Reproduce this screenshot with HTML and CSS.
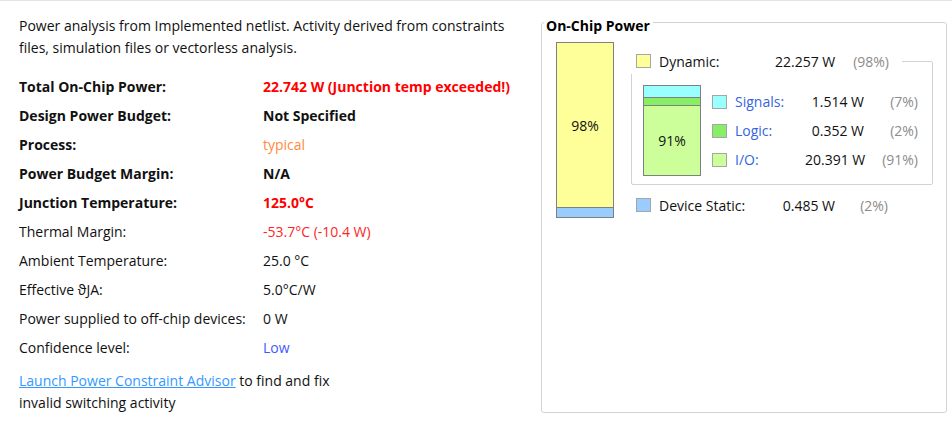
FILE: index.html
```html
<!DOCTYPE html>
<html>
<head>
<meta charset="utf-8">
<link rel="stylesheet" href="styles.css">
</head>
<body>
<div class="page">
  <section class="summary">
    <p class="intro">Power analysis from Implemented netlist. Activity derived from constraints<br>files, simulation files or vectorless analysis.</p>
    <div class="props">
      <div class="k b">Total On-Chip Power:</div><div class="v b red">22.742 W (Junction temp exceeded!)</div>
      <div class="k b">Design Power Budget:</div><div class="v b">Not Specified</div>
      <div class="k b">Process:</div><div class="v orange">typical</div>
      <div class="k b">Power Budget Margin:</div><div class="v b">N/A</div>
      <div class="k b">Junction Temperature:</div><div class="v b red">125.0°C</div>
      <div class="k">Thermal Margin:</div><div class="v red2">-53.7°C (-10.4 W)</div>
      <div class="k">Ambient Temperature:</div><div class="v">25.0 °C</div>
      <div class="k">Effective ϑJA:</div><div class="v">5.0°C/W</div>
      <div class="k">Power supplied to off-chip devices:</div><div class="v">0 W</div>
      <div class="k">Confidence level:</div><div class="v blue">Low</div>
    </div>
    <p class="advice"><a href="#">Launch Power Constraint Advisor</a> to find and fix<br>invalid switching activity</p>
  </section>
  <section class="chip">
    <div class="chip-title">On-Chip Power</div>
    <div class="chip-body">
      <div class="bar big">
        <div class="seg yellow grow">98%</div>
        <div class="seg static-seg"></div>
      </div>
      <div class="breakdown">
        <div class="row head">
          <span class="sw yellow"></span><span class="lbl">Dynamic:</span><span class="val">22.257 W</span><span class="pct">(98%)</span>
        </div>
        <div class="dyn-box">
          <div class="bar small">
            <div class="seg cyan s-sig"></div>
            <div class="seg green s-log"></div>
            <div class="seg lgreen grow">91%</div>
          </div>
          <div class="legend">
            <div class="lrow"><span class="sw cyan"></span><span class="lbl link">Signals:</span><span class="val">1.514 W</span><span class="pct">(7%)</span></div>
            <div class="lrow"><span class="sw green"></span><span class="lbl link">Logic:</span><span class="val">0.352 W</span><span class="pct">(2%)</span></div>
            <div class="lrow"><span class="sw lgreen"></span><span class="lbl link">I/O:</span><span class="val">20.391 W</span><span class="pct">(91%)</span></div>
          </div>
        </div>
        <div class="row static">
          <span class="sw blue-sw"></span><span class="lbl">Device Static:</span><span class="val">0.485 W</span><span class="pct">(2%)</span>
        </div>
      </div>
    </div>
  </section>
</div>
</body>
</html>
```

FILE: styles.css
```css
* { box-sizing: border-box; }
html, body { margin: 0; padding: 0; background: #fff; }
body {
  font-family: "Open Sans", "Noto Sans", sans-serif;
  font-size: 14px;
  color: #111;
}
.page {
  display: flex;
  align-items: flex-start;
  border-top: 1px solid #e4e4e4;
  height: 426px;
}
.summary {
  width: 541px;
  padding-left: 19px;
}
.intro {
  margin: 0;
  padding-top: 14px;
  line-height: 22px;
}
.props {
  display: grid;
  grid-template-columns: 244px auto;
  grid-auto-rows: 29px;
  align-items: center;
  margin-top: 13px;
  white-space: nowrap;
}
.b { font-weight: bold; }
.red { color: #ff0000; }
.red2 { color: #ff2626; }
.orange { color: #ff8a3c; }
.blue { color: #3d5cff; }
.advice {
  margin: 8px 0 0;
  line-height: 22px;
}
.advice a { color: #3399ff; text-decoration: underline; }

.chip {
  width: 406px;
  height: 391px;
  margin-top: 21px;
  border: 1px solid #d2d2d2;
  border-radius: 3px;
  white-space: nowrap;
}
.chip-title {
  display: table;
  margin: -6px 0 0 2px;
  padding: 0 3px 0 2px;
  background: #fff;
  font-weight: bold;
  font-size: 14px;
  line-height: 18px;
  color: #000;
}
.chip-body {
  display: flex;
  align-items: flex-start;
  padding: 7px 0 0 14px;
  gap: 17px;
}
.bar {
  display: flex;
  flex-direction: column;
  border: 1px solid #7f7f7f;
  background: #fff;
}
.bar.big { width: 58px; height: 176px; }
.bar.small { width: 58px; height: 91px; }
.seg { display: flex; align-items: center; justify-content: center; color: #111; }
.grow { flex: 1; }
.static-seg { height: 10px; border-top: 1px solid #7f7f7f; background: #99ccff; }
.s-sig { height: 11px; }
.s-log { height: 8px; border-top: 1px solid #7f7f7f; }
.lgreen.grow { border-top: 1px solid #7f7f7f; }
.yellow { background: #ffff99; }
.cyan { background: #99ffff; }
.green { background: #88ee66; }
.lgreen { background: #ccff99; }
.blue-sw { background: #99ccff; }

.breakdown {
  width: 302px;
  padding-top: 6px;
}
.row {
  display: grid;
  align-items: center;
  height: 26px;
  padding-left: 5px;
  background: #fff;
}
.val, .pct { text-align: right; }
.row.head {
  position: relative;
  z-index: 1;
  width: 271px;
  grid-template-columns: 15px 124px 60px 54px;
}
.row .lbl { padding-left: 8px; }
.pct { color: #8c8c8c; }
.sw {
  display: block;
  width: 15px;
  height: 14px;
  border: 1px solid #a6a6a6;
}
.dyn-box {
  display: flex;
  align-items: flex-start;
  margin-top: -13px;
  height: 124px;
  border: 1px solid #d2d2d2;
  border-radius: 2px;
  padding: 23px 0 0 11px;
  gap: 11px;
}
.legend { padding-top: 2px; }
.lrow {
  display: grid;
  grid-template-columns: 15px 78px 59px 54px;
  align-items: center;
  height: 29px;
}
.lrow .lbl { padding-left: 8px; }
.link { color: #3366dd; }
.row.static {
  margin-top: 7px;
  grid-template-columns: 15px 124px 60px 53px;
}
```
